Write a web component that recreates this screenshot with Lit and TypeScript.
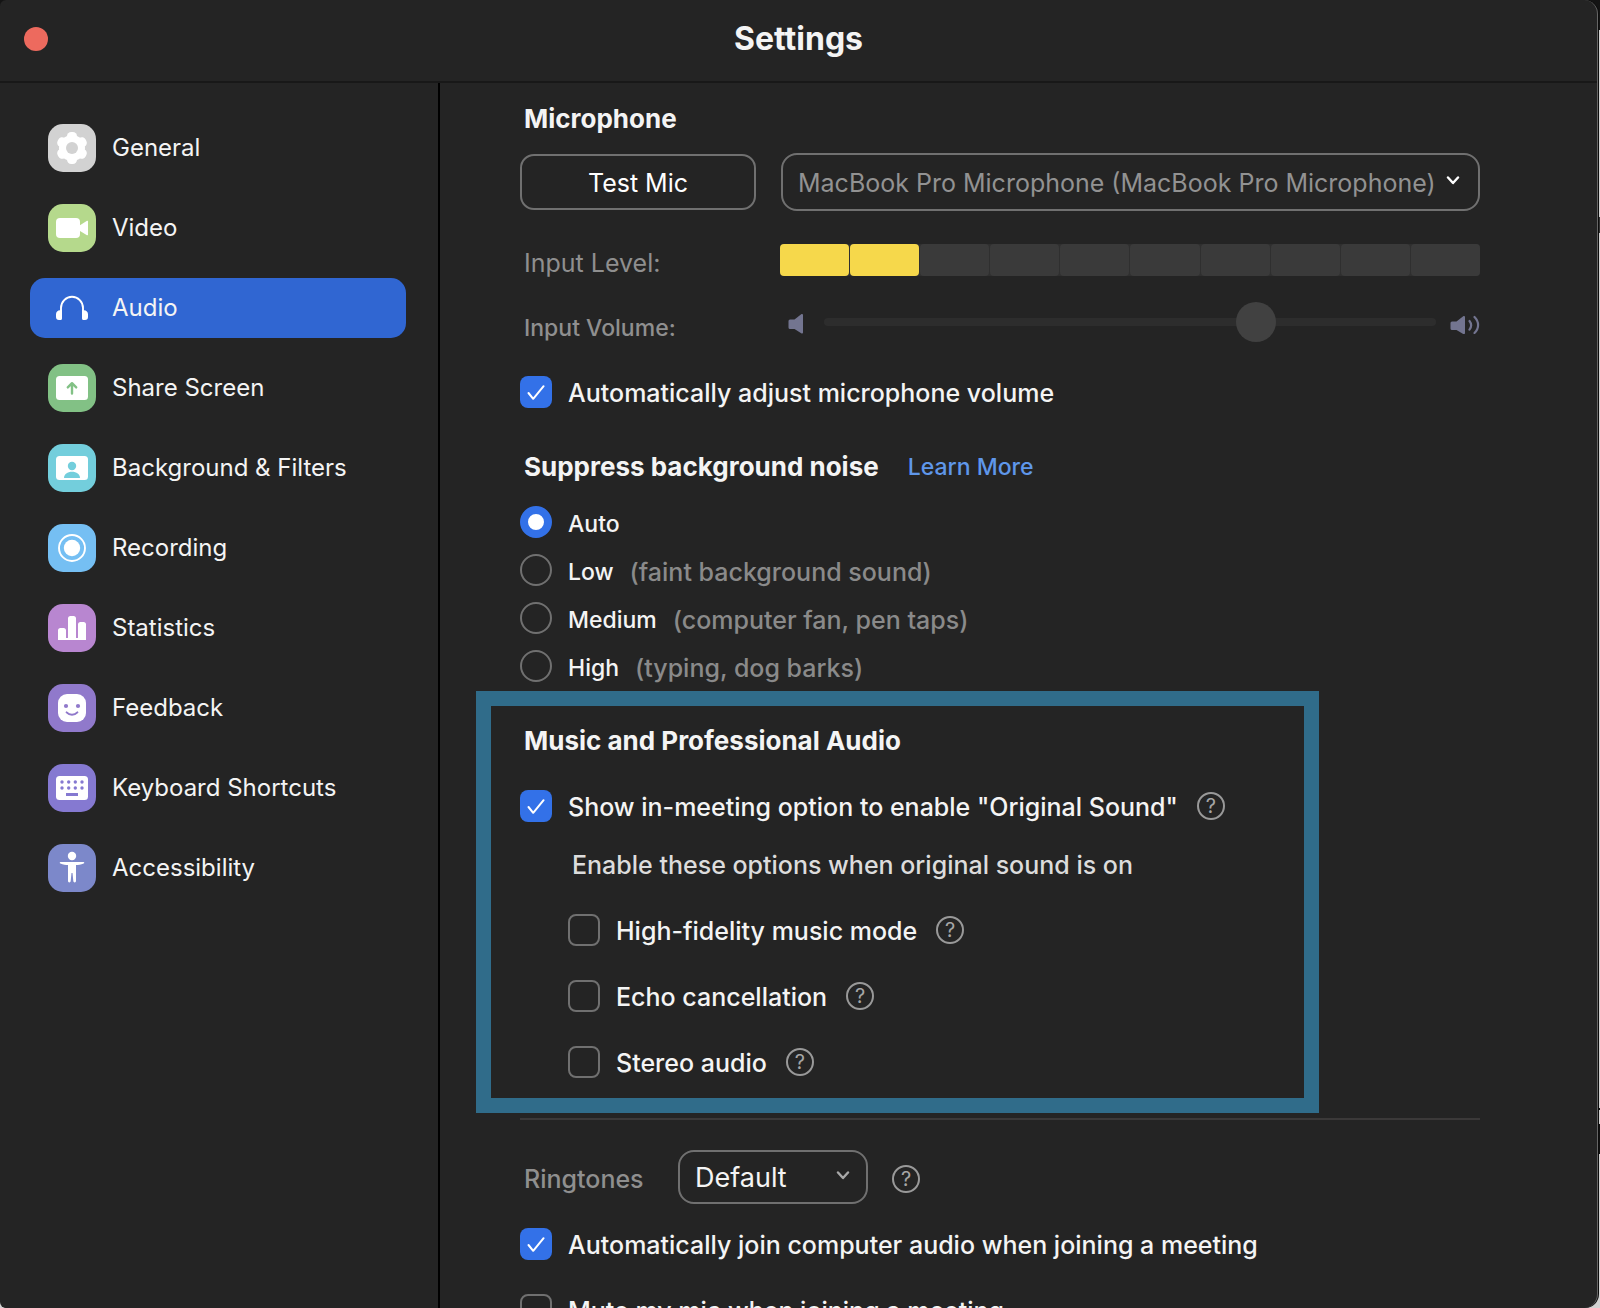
import { LitElement, html, css, svg, nothing } from "lit";
import { customElement, property, state } from "lit/decorators.js";
import { classMap } from "lit/directives/class-map.js";

interface NavItem {
  id: string;
  label: string;
}

const NAV: NavItem[] = [
  { id: "general", label: "General" },
  { id: "video", label: "Video" },
  { id: "audio", label: "Audio" },
  { id: "share", label: "Share Screen" },
  { id: "background", label: "Background & Filters" },
  { id: "recording", label: "Recording" },
  { id: "statistics", label: "Statistics" },
  { id: "feedback", label: "Feedback" },
  { id: "keyboard", label: "Keyboard Shortcuts" },
  { id: "accessibility", label: "Accessibility" },
];

const NOISE_LEVELS = [
  { id: "auto", label: "Auto", hint: "" },
  { id: "low", label: "Low", hint: "(faint background sound)" },
  { id: "medium", label: "Medium", hint: "(computer fan, pen taps)" },
  { id: "high", label: "High", hint: "(typing, dog barks)" },
];

const SOUND_OPTIONS = [
  { id: "hifi", label: "High-fidelity music mode" },
  { id: "echo", label: "Echo cancellation" },
  { id: "stereo", label: "Stereo audio" },
];

const MIC = "MacBook Pro Microphone (MacBook Pro Microphone)";

/* Glyphs are drawn on a 48 x 48 tile; "cut" takes the tile's own colour. */
const GLYPHS: Record<string, unknown> = {
  general: svg`
    <circle cx="24" cy="24" r="13"/>
    ${[0, 60, 120, 180, 240, 300].map(
      (a) => svg`<rect x="19" y="8" width="10" height="12" rx="4.2" transform="rotate(${a} 24 24)"/>`
    )}
    <circle class="cut" cx="24" cy="24" r="6"/>`,
  video: svg`
    <rect x="8" y="14" width="24" height="20" rx="4"/>
    <path d="M32 21.2 39 16.8a.7.7 0 0 1 1 .6v13.2a.7.7 0 0 1-1 .6L32 27z"/>`,
  audio: svg`
    <path class="line" stroke-width="1.9" d="M13 29v-5a11 11.2 0 0 1 22 0v5"/>
    <path d="M14 26v8.5a1.5 1.5 0 0 1-1.5 1.5H11a3 3 0 0 1-3-3v-2.6a4 4 0 0 1 4-4.2zM34 26v8.5a1.5 1.5 0 0 0 1.5 1.5H37a3 3 0 0 0 3-3v-2.6a4 4 0 0 0-4-4.2z"/>`,
  share: svg`
    <rect x="8" y="12" width="32" height="24" rx="3.5"/>
    <path class="cut-line" stroke-width="2.4" d="M24 29.500V19.500M19.800 23.400 24 19.200l4.200 4.200"/>`,
  background: svg`
    <rect x="8" y="12" width="32" height="24" rx="3.5"/>
    <circle class="cut" cx="24" cy="22" r="4.2"/>
    <path class="cut" d="M16 34c0-3.800 3.500-6.200 8-6.200s8 2.400 8 6.200z"/>`,
  recording: svg`
    <circle class="line" cx="24" cy="24" r="13" stroke-width="1.9"/>
    <circle cx="24" cy="24" r="8.200"/>`,
  statistics: svg`
    <path d="M10 36V26.500A2.500 2.500 0 0 1 12.500 24h3a2.500 2.500 0 0 1 2.500 2.500V34h2V14.500a2.500 2.500 0 0 1 2.500-2.500h3a2.500 2.500 0 0 1 2.500 2.500V34h2V20.500a2.500 2.500 0 0 1 2.500-2.500h3a2.500 2.500 0 0 1 2.500 2.500V36z"/>`,
  feedback: svg`
    <rect x="10" y="10" width="28" height="28" rx="9"/>
    <circle class="cut" cx="18" cy="22" r="2.1"/>
    <circle class="cut" cx="30" cy="22" r="2.1"/>
    <path class="cut-line" stroke-width="2" d="M18.600 28.400c3 3 7.800 3 10.800 0"/>`,
  keyboard: svg`
    <rect x="8" y="12" width="32" height="24" rx="3.5"/>
    ${[18, 24].map((y) => [14, 20.7, 27.3, 34].map((x) => svg`<circle class="cut" cx=${x} cy=${y} r="1.7"/>`))}
    <rect class="cut" x="18" y="29" width="12" height="3"/>`,
  accessibility: svg`
    <circle cx="24" cy="12" r="4.2"/>
    <path d="M12.500 18h23a.7.7 0 0 1 .1 1.400C33 20.400 30 20.900 28 21v16a1.200 1.200 0 0 1-2.700.1L24.500 29h-1l-.8 8.100A1.200 1.200 0 0 1 20 37V21c-2-.1-5-.6-7.600-1.600a.7.7 0 0 1 .1-1.400z"/>`,
};

@customElement("nav-icon")
class NavIcon extends LitElement {
  @property() name = "general";

  static styles = css`
    :host { display: block; flex: none; width: 48px; height: 48px; }
    .tile { display: block; width: 100%; height: 100%; border-radius: 15px; background: var(--tile); fill: #fff; }
    .line { fill: none; stroke: #fff; }
    .cut { fill: var(--tile); }
    .cut-line { fill: none; stroke: var(--tile); stroke-linecap: round; stroke-linejoin: round; }
    .general { --tile: #d2d2d2; }
    .video { --tile: #b5d98c; }
    .audio { --tile: transparent; }
    .share { --tile: #82c185; }
    .background { --tile: #73cedc; }
    .recording { --tile: #75bff3; }
    .statistics { --tile: #b886d0; }
    .feedback { --tile: #9079cb; }
    .keyboard { --tile: #8579d1; }
    .accessibility { --tile: #7c88ca; }
  `;

  render() {
    return html`<svg class="tile ${this.name}" viewBox="0 0 48 48" aria-hidden="true">${GLYPHS[this.name]}</svg>`;
  }
}

@customElement("app-root")
class AppRoot extends LitElement {
  @state() private active = "audio";
  @state() private level = 2;

  static styles = css`
    :host {
      display: block;
      height: 100vh;
      box-sizing: border-box;
      padding-right: 2px;
      overflow: hidden;
      background: linear-gradient(
        #141414 30px, #d2d2d2 30px 217px, #333 217px 233px, #d2d2d2 233px 1108px,
        #111 1108px 1110px, #d2d2d2 1110px 1124px, #111 1124px 1154px, #d2d2d2 1154px
      );
      font-family: Inter, "Liberation Sans", sans-serif;
      color: #f4f4f4;
    }
    * { box-sizing: border-box; }
    h1, h2, p { margin: 0; }
    button, select, input { font: inherit; color: inherit; margin: 0; }

    .window {
      display: grid;
      grid-template-rows: auto minmax(0, 1fr);
      height: 100%;
      overflow: hidden;
      background: #242424;
      border-right: 1px solid #666;
      border-radius: 6px 14px 14px 6px;
      box-shadow: 1px 0 0 #0c0c0c;
    }

    .titlebar {
      display: grid;
      grid-template-columns: 1fr auto 1fr;
      align-items: center;
      height: 83px;
      padding: 0 24px 4px;
      border-bottom: 2px solid #181818;
    }
    .close { width: 24px; height: 24px; padding: 0; border: 0; border-radius: 50%; background: #ed6a5e; }
    .title { font-size: 32px; line-height: 40px; font-weight: 700; }

    .body { display: grid; grid-template-columns: 440px minmax(0, 1fr); min-height: 0; }

    .sidebar {
      display: flex;
      flex-direction: column;
      gap: 20px;
      padding: 35px 32px 0 30px;
      border-right: 2px solid #000;
    }
    .nav-item {
      display: flex;
      align-items: center;
      gap: 16px;
      height: 60px;
      padding: 0 18px;
      border-radius: 15px;
      font-size: 24px;
      line-height: 32px;
      color: #f4f4f4;
      text-decoration: none;
      white-space: nowrap;
    }
    .nav-item.active { background: #3066d2; }

    .panel { min-height: 0; overflow: hidden; padding: 20px 117px 0 80px; font-size: 25px; line-height: 32px; white-space: nowrap; }
    .heading { padding-left: 4px; font-size: 26px; line-height: 32px; font-weight: 700; }

    .mic-row { display: grid; grid-template-columns: 236px minmax(0, 1fr); align-items: center; gap: 25px; margin-top: 18px; }
    .test { height: 56px; padding: 2px 0 0; border: 2px solid #707070; border-radius: 14px; background: none; color: #fff; }

    .picker { display: grid; align-items: center; }
    .picker > * { grid-area: 1 / 1; }
    .picker select { width: 100%; appearance: none; border: 2px solid #707070; background: #242424; padding: 2px 0 0 15px; }
    .picker svg { justify-self: end; margin-right: 17px; pointer-events: none; fill: none; stroke-width: 2.4; stroke-linecap: round; stroke-linejoin: round; }
    .mic select { height: 58px; border-radius: 16px; color: #929292; }
    .mic svg { margin-right: 19px; stroke: #fff; }
    .ring select { width: 190px; height: 54px; border-radius: 16px; font-size: 27px; }
    .ring svg { stroke: #a8a8a8; }

    .meter-row { display: grid; grid-template-columns: 256px minmax(0, 1fr); margin-top: 33px; padding-left: 4px; }
    .muted { color: #8f8f8f; }
    .meter-row .muted { line-height: 38px; height: 36px; }
    .meter { display: grid; grid-template-columns: repeat(10, 1fr); gap: 1px; height: 32px; border-radius: 4px; background: #2f2f2f; }
    .cell { border-radius: 4px; background: #3a3a3a; }
    .cell.on { background: #f6d84b; }

    .volume-row { display: grid; grid-template-columns: 264px minmax(0, 1fr); align-items: end; margin-top: 22px; padding-left: 4px; }
    .volume-row .muted { font-size: 23px; line-height: 28px; font-weight: 500; }
    .volume { display: flex; align-items: center; height: 40px; }
    .speaker { flex: none; height: 24px; fill: #737590; }
    .speaker path.wave { fill: none; stroke: #737590; stroke-width: 2.2; stroke-linecap: round; }
    .slider { flex: 1; min-width: 0; height: 40px; margin: 0 14px 0 20px; appearance: none; background: none; }
    .slider::-webkit-slider-runnable-track { height: 8px; border-radius: 4px; background: #2d2d2d; }
    .slider::-webkit-slider-thumb { appearance: none; width: 40px; height: 40px; margin-top: -16px; border-radius: 50%; background: #414141; }

    .check { display: flex; align-items: center; height: 32px; line-height: 34px; font-weight: 500; }
    .check label { display: flex; align-items: flex-start; gap: 16px; height: 32px; }
    .box { display: grid; flex: none; width: 32px; height: 32px; }
    .box > * { grid-area: 1 / 1; }
    .box input { appearance: none; width: 32px; height: 32px; border: 2px solid #707070; border-radius: 8px; }
    .box input:checked { border: 0; background: #3371e8; }
    .box svg { pointer-events: none; visibility: hidden; fill: none; stroke: #fff; stroke-width: 2; stroke-linecap: round; stroke-linejoin: round; }
    .box input:checked + svg { visibility: visible; }

    .help {
      flex: none;
      width: 28px;
      height: 28px;
      margin-left: 19px;
      padding: 0;
      border: 2px solid #999;
      border-radius: 50%;
      background: none;
      color: #a6a6a6;
      font-size: 20px;
      line-height: 24px;
      font-weight: 400;
    }

    .auto-adjust { margin-top: 34px; }
    .suppress { display: flex; align-items: center; gap: 29px; margin-top: 43px; }
    .learn { font-size: 23px; font-weight: 500; color: #5f97ea; text-decoration: none; }

    .levels { display: grid; gap: 14px; margin: 23px 0 0; padding: 0; border: 0; }
    .level { display: flex; align-items: flex-start; height: 34px; line-height: 36px; }
    .level input { appearance: none; flex: none; width: 32px; height: 32px; margin-right: 16px; border: 2px solid #707070; border-radius: 50%; }
    .level input:checked { border: 8px solid #3371e8; background: #fff; }
    .level-name { font-size: 23px; font-weight: 500; }
    .hint { margin-left: 16px; font-weight: 500; color: #8a8a8a; }

    .pro { margin: 7px 161px 0 -44px; padding: 19px 0 20px 29px; border: 15px solid #306c8a; }
    .pro-toggle { margin-top: 33px; }
    .note { margin: 27px 0 0 52px; font-weight: 500; color: #dcdcdc; }
    .options { display: grid; gap: 34px; margin: 33px 0 0 48px; }

    .rule { height: 2px; margin: 5px 0 0; border: 0; background: #3b3939; }
    .ringtones { display: flex; align-items: center; margin-top: 30px; padding-left: 4px; }
    .ringtones .muted { width: 154px; padding-top: 4px; font-weight: 500; }
    .ringtones .help { margin: 4px 0 0 24px; }
    .joining { display: grid; gap: 34px; margin-top: 24px; }
  `;

  private chevron() {
    return html`<svg width="16" height="12" viewBox="0 0 16 12" aria-hidden="true"><path d="M3 1.500 8 7l5-5.500"/></svg>`;
  }

  private help(topic: string) {
    return html`<button class="help" type="button" aria-label=${`Help: ${topic}`}>?</button>`;
  }

  private check(id: string, label: string, checked: boolean, extra = "", help = false) {
    return html`
      <div class="check ${extra}">
        <label for=${id}>
          <span class="box">
            <input id=${id} type="checkbox" .checked=${checked} />
            <svg viewBox="0 0 32 32" aria-hidden="true"><path d="m8.500 17 4.700 5.800L23.600 10.200"/></svg>
          </span>
          ${label}
        </label>
        ${help ? this.help(label) : nothing}
      </div>`;
  }

  render() {
    return html`
      <div class="window">
        <header class="titlebar">
          <button class="close" type="button" aria-label="Close"></button>
          <h1 class="title">Settings</h1>
        </header>
        <div class="body">
          <nav class="sidebar">
            ${NAV.map(
              (n) => html`
                <a
                  href="#${n.id}"
                  class=${classMap({ "nav-item": true, active: n.id === this.active })}
                  @click=${() => (this.active = n.id)}
                ><nav-icon name=${n.id}></nav-icon>${n.label}</a>`
            )}
          </nav>
          <main class="panel">
            <h2 class="heading">Microphone</h2>
            <div class="mic-row">
              <button class="test" type="button">Test Mic</button>
              <div class="picker mic">
                <select aria-label="Microphone"><option>${MIC}</option></select>
                ${this.chevron()}
              </div>
            </div>
            <div class="meter-row">
              <span class="muted">Input Level:</span>
              <div class="meter" role="meter" aria-label="Input Level" aria-valuemin="0" aria-valuemax="10" aria-valuenow=${this.level}>
                ${Array.from({ length: 10 }, (_, i) => html`<span class=${classMap({ cell: true, on: i < this.level })}></span>`)}
              </div>
            </div>
            <div class="volume-row">
              <label class="muted" for="volume">Input Volume:</label>
              <div class="volume">
                <svg class="speaker" width="16" viewBox="0 0 16 24" aria-hidden="true">
                  <path d="M2 9.500h4.500L13.200 4.300c.8-.6 1.800-.2 1.800.8v17.300c0 1-1 1.400-1.800.8L6.500 19H2a1.500 1.500 0 0 1-1.500-1.500V11A1.500 1.500 0 0 1 2 9.500z"/>
                </svg>
                <input class="slider" id="volume" type="range" min="0" max="100" value="72" />
                <svg class="speaker" width="30" viewBox="0 0 30 24" aria-hidden="true">
                  <path d="M2 11.500h4.500L13.200 6.300c.8-.6 1.800-.2 1.800.8v16c0 1-1 1.400-1.800.8L6.500 20H2a1.500 1.500 0 0 1-1.500-1.500V13A1.500 1.500 0 0 1 2 11.500z"/>
                  <path class="wave" d="M19.500 11c2 2.600 2 6 0 8.600M24.500 7c4.800 4.600 4.800 11.700 0 16"/>
                </svg>
              </div>
            </div>
            ${this.check("auto-adjust", "Automatically adjust microphone volume", true, "auto-adjust")}

            <div class="suppress">
              <h2 class="heading">Suppress background noise</h2>
              <a class="learn" href="#learn-more">Learn More</a>
            </div>
            <fieldset class="levels" aria-label="Suppress background noise">
              ${NOISE_LEVELS.map(
                (l) => html`
                  <label class="level">
                    <input type="radio" name="noise" value=${l.id} ?checked=${l.id === "auto"} />
                    <span class="level-name">${l.label}</span>
                    ${l.hint ? html`<span class="hint">${l.hint}</span>` : nothing}
                  </label>`
              )}
            </fieldset>

            <section class="pro">
              <h2 class="heading">Music and Professional Audio</h2>
              ${this.check("original", 'Show in-meeting option to enable "Original Sound"', true, "pro-toggle", true)}
              <p class="note">Enable these options when original sound is on</p>
              <div class="options">
                ${SOUND_OPTIONS.map((o) => this.check(o.id, o.label, false, "", true))}
              </div>
            </section>

            <hr class="rule" />
            <div class="ringtones">
              <label class="muted" for="ringtone">Ringtones</label>
              <div class="picker ring">
                <select id="ringtone"><option>Default</option></select>
                ${this.chevron()}
              </div>
              ${this.help("Ringtones")}
            </div>
            <div class="joining">
              ${this.check("join", "Automatically join computer audio when joining a meeting", true)}
              ${this.check("mute", "Mute my mic when joining a meeting", false)}
            </div>
          </main>
        </div>
      </div>`;
  }
}
